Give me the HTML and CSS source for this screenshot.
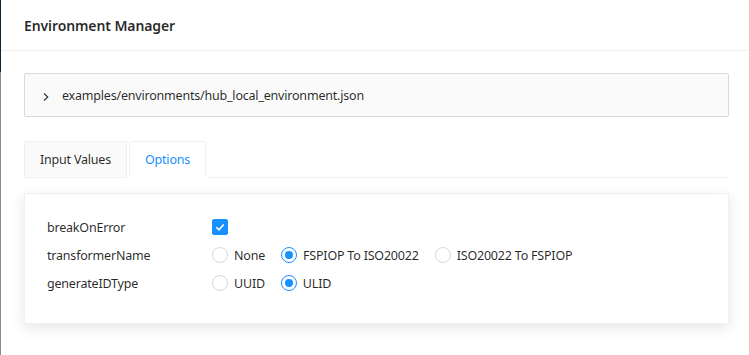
FILE: index.html
```html
<!DOCTYPE html>
<html lang="en">
<head>
    <meta charset="UTF-8">
    <meta name="viewport" content="width=device-width, initial-scale=1.0">
    <title>Environment Manager</title>
    <link rel="stylesheet" href="styles.css">
</head>
<body>

<div class="layout">
    <div class="sider-edge"></div>

    <div class="main">
        <div class="page-header">
            <h2>Environment Manager</h2>
        </div>

        <div class="content">
            <div class="collapse">
                <div class="collapse-header">
                    <svg class="collapse-arrow" width="10" height="10" viewBox="0 0 10 10">
                        <path d="M3 1.5 L6.8 5 L3 8.5" fill="none" stroke="#333" stroke-width="1.1"/>
                    </svg>
                    <span>examples/environments/hub_local_environment.json</span>
                </div>
            </div>

            <div class="tabs">
                <div class="tab">Input Values</div>
                <div class="tab tab-active">Options</div>
                <div class="tab-rest"></div>
            </div>

            <div class="card">
                <div class="option-row">
                    <div class="option-label">breakOnError</div>
                    <div class="option-control">
                        <span class="checkbox checked">
                            <svg width="16" height="16" viewBox="0 0 16 16">
                                <path d="M4.3 8.2 L7 10.8 L11.7 5.4" fill="none" stroke="#fff" stroke-width="1.5"/>
                            </svg>
                        </span>
                    </div>
                </div>
                <div class="option-row">
                    <div class="option-label">transformerName</div>
                    <div class="option-control">
                        <label class="radio"><span class="radio-dot"></span>None</label>
                        <label class="radio"><span class="radio-dot checked"></span>FSPIOP To ISO20022</label>
                        <label class="radio"><span class="radio-dot"></span>ISO20022 To FSPIOP</label>
                    </div>
                </div>
                <div class="option-row">
                    <div class="option-label">generateIDType</div>
                    <div class="option-control">
                        <label class="radio"><span class="radio-dot"></span>UUID</label>
                        <label class="radio"><span class="radio-dot checked"></span>ULID</label>
                    </div>
                </div>
            </div>
        </div>
    </div>
</div>

</body>
</html>
```

FILE: styles.css
```css
body {
    margin: 0;
    padding: 0;
    background: #fff;
    font-family: "Noto Sans", "Open Sans", sans-serif;
    font-size: 12.5px;
    letter-spacing: -0.2px;
    color: rgba(0, 0, 0, 0.85);
}

.layout {
    display: flex;
    min-height: 355px;
}

.sider-edge {
    width: 1px;
    flex-shrink: 0;
    background: linear-gradient(180deg, #0f2236 0, #0f2236 72px, #8c8c8c 72px);
}

.main {
    flex: 1;
}

.page-header {
    height: 50px;
    border-bottom: 1px solid #f0f0f0;
    padding: 0 23px;
    display: flex;
    align-items: center;
}

.page-header h2 {
    margin: 0;
    font-size: 14px;
    letter-spacing: -0.1px;
    font-weight: 600;
    color: rgba(0, 0, 0, 0.85);
}

.content {
    padding: 22px 20px 0 23px;
}

.collapse {
    border: 1px solid #d9d9d9;
    border-radius: 2px;
    background: #fafafa;
}

.collapse-header {
    height: 42px;
    display: flex;
    align-items: center;
    padding-left: 16px;
    gap: 11px;
}

.collapse-arrow {
    margin-top: 3px;
}

.tabs {
    display: flex;
    margin-top: 24px;
    height: 37px;
}

.tab {
    box-sizing: border-box;
    padding: 0 15px;
    display: flex;
    align-items: center;
    border: 1px solid #f0f0f0;
    border-radius: 2px 2px 0 0;
    background: #fafafa;
    margin-right: 2px;
}

.tab-active {
    background: #fff;
    color: #1890ff;
    border-bottom-color: #fff;
}

.tab-rest {
    flex: 1;
    border-bottom: 1px solid #f0f0f0;
}

.card {
    margin-top: 15px;
    background: #fff;
    border: 1px solid #f0f0f0;
    box-shadow: 0 4px 14px rgba(0, 0, 0, 0.1);
    padding: 22px 22px 29px;
    display: flex;
    flex-direction: column;
    gap: 6px;
}

.option-row {
    display: flex;
    align-items: center;
    height: 22px;
}

.option-label {
    width: 165px;
}

.option-control {
    display: flex;
    align-items: center;
}

.checkbox {
    width: 16px;
    height: 16px;
    border-radius: 2px;
    border: 1px solid #d9d9d9;
    box-sizing: border-box;
    display: block;
}

.checkbox.checked {
    background: #1890ff;
    border-color: #1890ff;
}

.checkbox svg {
    display: block;
    margin: -1px;
}

.radio {
    display: flex;
    align-items: center;
    margin-right: 16px;
}

.radio-dot {
    width: 16px;
    height: 16px;
    box-sizing: border-box;
    border: 1px solid #d9d9d9;
    border-radius: 50%;
    margin-right: 6px;
    position: relative;
}

.radio-dot.checked {
    border-color: #1890ff;
}

.radio-dot.checked::after {
    content: "";
    position: absolute;
    left: 3px;
    top: 3px;
    width: 8px;
    height: 8px;
    border-radius: 50%;
    background: #1890ff;
}
```
